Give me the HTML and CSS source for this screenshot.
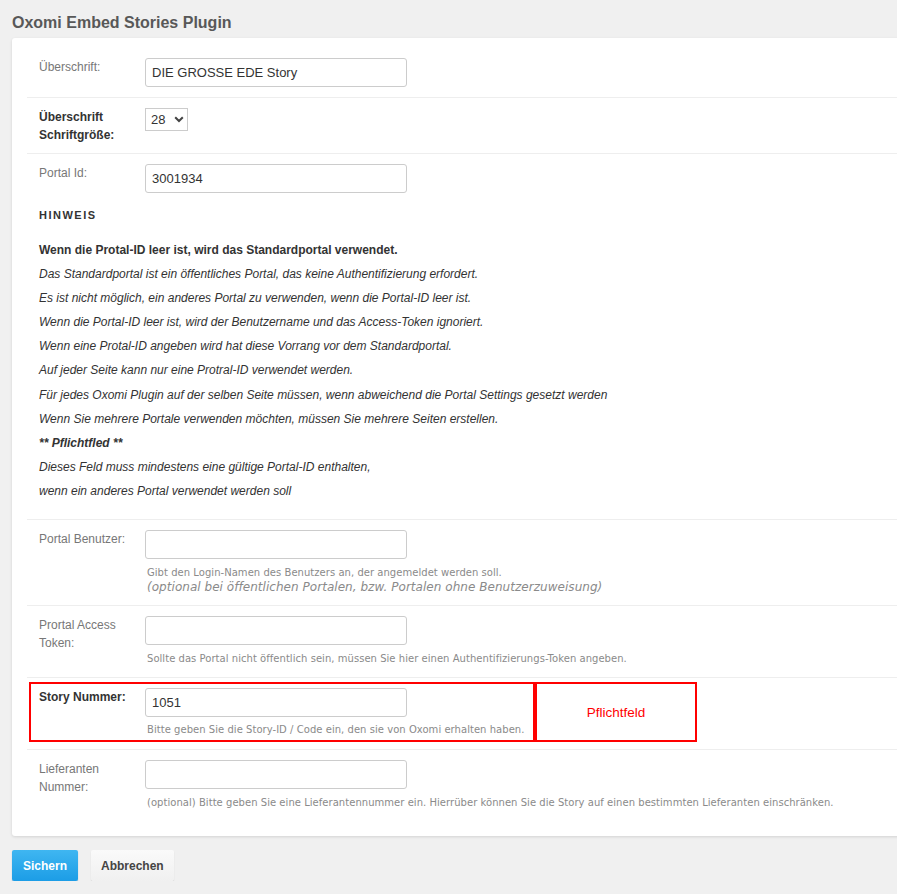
FILE: index.html
```html
<!DOCTYPE html>
<html lang="de">
<head>
<meta charset="utf-8">
<title>Oxomi Embed Stories Plugin</title>
<link rel="stylesheet" href="styles.css">
</head>
<body>
<div class="page">
  <h1 class="title">Oxomi Embed Stories Plugin</h1>
  <div class="card">
    <div class="row r1">
      <div class="field">
        <label class="lbl">Überschrift:</label>
        <div class="ctrl"><input class="txt" type="text" value="DIE GROSSE EDE Story"></div>
      </div>
    </div>
    <div class="row r2">
      <div class="field">
        <label class="lbl b">Überschrift<br>Schriftgröße:</label>
        <div class="ctrl">
          <div class="selwrap">
            <select class="sel"><option>28</option></select>
            <svg class="chev" width="10" height="7" viewBox="0 0 10 7"><path d="M1.2 1.2 L5 5 L8.8 1.2" fill="none" stroke="#444" stroke-width="2"/></svg>
          </div>
        </div>
      </div>
    </div>
    <div class="row r3">
      <div class="field">
        <label class="lbl">Portal Id:</label>
        <div class="ctrl"><input class="txt" type="text" value="3001934"></div>
      </div>
      <div class="note">
        <h4 class="note-h">HINWEIS</h4>
        <div class="nl"><strong>Wenn die Protal-ID leer ist, wird das Standardportal verwendet.</strong></div>
        <div class="nl"><em>Das Standardportal ist ein öffentliches Portal, das keine Authentifizierung erfordert.</em></div>
        <div class="nl"><em>Es ist nicht möglich, ein anderes Portal zu verwenden, wenn die Portal-ID leer ist.</em></div>
        <div class="nl"><em>Wenn die Portal-ID leer ist, wird der Benutzername und das Access-Token ignoriert.</em></div>
        <div class="nl"><em>Wenn eine Protal-ID angeben wird hat diese Vorrang vor dem Standardportal.</em></div>
        <div class="nl"><em>Auf jeder Seite kann nur eine Protral-ID verwendet werden.</em></div>
        <div class="nl"><em>Für jedes Oxomi Plugin auf der selben Seite müssen, wenn abweichend die Portal Settings gesetzt werden</em></div>
        <div class="nl"><em>Wenn Sie mehrere Portale verwenden möchten, müssen Sie mehrere Seiten erstellen.</em></div>
        <div class="nl"><strong><em>** Pflichtfled **</em></strong></div>
        <div class="nl"><em>Dieses Feld muss mindestens eine gültige Portal-ID enthalten,</em></div>
        <div class="nl"><em>wenn ein anderes Portal verwendet werden soll</em></div>
      </div>
    </div>
    <div class="row">
      <div class="field">
        <label class="lbl">Portal Benutzer:</label>
        <div class="ctrl">
          <input class="txt" type="text" value="">
          <div class="help">Gibt den Login-Namen des Benutzers an, der angemeldet werden soll.</div>
          <div class="help it">(optional bei öffentlichen Portalen, bzw. Portalen ohne Benutzerzuweisung)</div>
        </div>
      </div>
    </div>
    <div class="row">
      <div class="field">
        <label class="lbl">Prortal Access<br>Token:</label>
        <div class="ctrl">
          <input class="txt" type="text" value="">
          <div class="help">Sollte das Portal nicht öffentlich sein, müssen Sie hier einen Authentifizierungs-Token angeben.</div>
        </div>
      </div>
    </div>
    <div class="row req">
      <div class="reqline">
        <div class="field reqbox">
          <label class="lbl b">Story Nummer:</label>
          <div class="ctrl">
            <input class="txt" type="text" value="1051">
            <div class="help">Bitte geben Sie die Story-ID / Code ein, den sie von Oxomi erhalten haben.</div>
          </div>
        </div>
        <div class="pflicht">Pflichtfeld</div>
      </div>
    </div>
    <div class="row last">
      <div class="field">
        <label class="lbl">Lieferanten<br>Nummer:</label>
        <div class="ctrl">
          <input class="txt" type="text" value="">
          <div class="help">(optional) Bitte geben Sie eine Lieferantennummer ein. Hierrüber können Sie die Story auf einen bestimmten Lieferanten einschränken.</div>
        </div>
      </div>
    </div>
  </div>
  <div class="actions">
    <button class="btn primary" type="button">Sichern</button>
    <button class="btn" type="button">Abbrechen</button>
  </div>
</div>
</body>
</html>
```

FILE: styles.css
```css
html {
  overflow-x: hidden;
}
body {
  margin: 0;
  background: #f0f0f0;
  font-family: "Liberation Sans", Arial, sans-serif;
  color: #333;
}
.page {
  padding: 0 0 0 12px;
}
.title {
  margin: 0;
  padding: 13px 0 5px;
  font-size: 16px;
  line-height: 20px;
  font-weight: bold;
  color: #585858;
}
.card {
  background: #fff;
  border-radius: 3px;
  box-shadow: 0 1px 3px rgba(0, 0, 0, 0.12);
  padding: 10px 0 15px;
  margin-right: -40px;
}
.row {
  margin-left: 15px;
  border-top: 1px solid #eee;
  padding: 10px 0 11px 12px;
}
.row.r1 {
  border-top: 0;
  padding-bottom: 10px;
}
.row.r2 {
  padding-bottom: 9px;
}
.row.r3 {
  padding-bottom: 16px;
}
.field {
  display: flex;
  align-items: flex-start;
}
.lbl {
  width: 106px;
  flex: none;
  font-size: 12px;
  line-height: 18px;
  color: #777;
}
.lbl.b {
  font-weight: bold;
  color: #333;
}
.ctrl {
  display: flex;
  flex-direction: column;
  align-items: flex-start;
}
.txt {
  box-sizing: border-box;
  width: 262px;
  height: 29px;
  margin: 0;
  padding: 0 6px;
  border: 1px solid #ccc;
  border-radius: 3px;
  font-family: "Liberation Sans", Arial, sans-serif;
  font-size: 13px;
  color: #333;
  background: #fff;
  outline: none;
}
.selwrap {
  position: relative;
  width: 43px;
  height: 23px;
}
.sel {
  -webkit-appearance: none;
  appearance: none;
  box-sizing: border-box;
  width: 43px;
  height: 23px;
  margin: 0;
  padding: 0 0 0 5px;
  border: 1px solid #ccc;
  border-radius: 0;
  background: #fff;
  font-family: "Liberation Sans", Arial, sans-serif;
  font-size: 13px;
  color: #333;
  outline: none;
}
.chev {
  position: absolute;
  left: 29px;
  top: 8px;
  pointer-events: none;
}
.note {
  margin-top: 10px;
  font-size: 12px;
  line-height: 24.1px;
  color: #333;
}
.note-h {
  margin: 0 0 11px;
  font-size: 11px;
  line-height: 24px;
  font-weight: bold;
  letter-spacing: 1.5px;
  color: #333;
}
.help {
  padding-left: 2px;
  font-family: "DejaVu Sans", Verdana, sans-serif;
  font-size: 10px;
  line-height: 14px;
  letter-spacing: 0.04px;
  color: #8a8a8a;
  white-space: nowrap;
}
.ctrl .txt + .help {
  margin-top: 7px;
}
.help.it {
  font-style: italic;
  font-size: 12px;
  line-height: 14px;
}
.row.req {
  padding: 4px 0 7px 2px;
}
.reqline {
  display: flex;
}
.reqbox {
  box-sizing: border-box;
  width: 506px;
  border: 2px solid #f00;
  padding: 4px 0 3px 8px;
}
.reqbox .txt + .help {
  margin-top: 6px;
}
.pflicht {
  box-sizing: border-box;
  width: 162px;
  border: 2px solid #f00;
  display: flex;
  align-items: center;
  justify-content: center;
  color: #f00;
  font-size: 13.5px;
}
.actions {
  display: flex;
  gap: 13px;
  margin-top: 14px;
}
.btn {
  height: 31px;
  padding: 0 10px;
  border: 0;
  border-radius: 2px;
  font-family: "Liberation Sans", Arial, sans-serif;
  font-size: 12px;
  font-weight: bold;
  color: #444;
  background: linear-gradient(#fafafa, #f0f0f0);
  box-shadow: 0 1px 1px rgba(0, 0, 0, 0.18);
}
.btn.primary {
  padding: 0 11px;
  color: #fff;
  background: linear-gradient(#3fb6f1, #1c9de6);
  box-shadow: 0 1px 1px rgba(0, 60, 120, 0.35);
}
```
